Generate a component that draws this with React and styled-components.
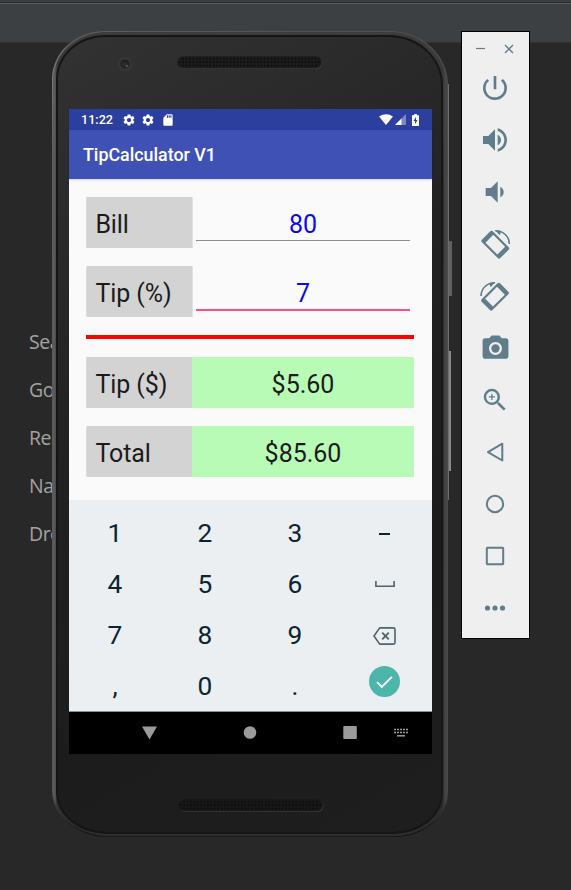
import React from "react";
import styled, { createGlobalStyle } from "styled-components";
import {
  MdPowerSettingsNew,
  MdVolumeUp,
  MdVolumeDown,
  MdPhotoCamera,
  MdZoomIn,
  MdSettings,
  MdSdCard,
} from "react-icons/md";

const GlobalStyle = createGlobalStyle`
  * { box-sizing: border-box; }
  body { margin: 0; background: #282828; }
  svg { display: block; flex: none; }
`;

const Desktop = styled.main`
  position: relative;
  width: 571px;
  height: 890px;
  overflow: hidden;
  background: #282828;
  font-family: Roboto, sans-serif;
`;

const EditorTabs = styled.div`
  height: 43px;
  background: linear-gradient(#3c3f41 2px, #292a2b 2px 3px, #58595a 3px 4px, #3c4042 4px);
  border-bottom: 1px solid #303234;
`;

const HintList = styled.ul`
  list-style: none;
  margin: 0;
  padding: 275px 0 0 29px;
  width: 64px;
  overflow: hidden;
`;

const Hint = styled.li`
  height: 48px;
  font: 19.5px/48px "Open Sans", "Noto Sans", sans-serif;
  letter-spacing: -0.5px;
  color: #a3a3a3;
  white-space: nowrap;
`;

/* ---------- device ---------- */

const Device = styled.section`
  position: absolute;
  left: 52px;
  top: 31px;
  width: 396px;
  height: 806px;
  border-radius: 53px 58px 54px 56px / 48px 54px 44px 46px;
  padding: 1px 1px 1px 1px;
  background:
    linear-gradient(transparent 94%, #171717 99.5%),
    linear-gradient(100deg, #8a8a8a 0, #5e5e5e 4%, #505050 50%, #4b494a 100%);
`;

const Rim = styled.div`
  height: 100%;
  padding: 3px 4px 2px 3px;
  border-radius: inherit;
  background:
    linear-gradient(90deg, #5b5a5b 0 2px, transparent 4px),
    linear-gradient(270deg, #454344 0 2px, transparent 4px),
    linear-gradient(#3c3c3c, #2c2b2c 20%, #2c2b2c 75%, #2e2e2e);
`;

const Body = styled.div`
  height: 100%;
  display: flex;
  flex-direction: column;
  align-items: center;
  border-radius: 49px 54px 50px 51px / 44px 50px 40px 42px;
  border: 2px solid #151515;
  border-right-color: #171717;
  background: linear-gradient(150deg, #323233 0, #2b2b2c 18%, #222 40%, #1c1c1c 70%, #1e1e1e 100%);
`;

const Bezel = styled.div`
  align-self: stretch;
  flex: none;
  height: ${(p) => p.$height}px;
  padding-top: ${(p) => p.$offset}px;
  padding-left: ${(p) => p.$left}px;
  display: flex;
  gap: 44px;
  align-items: flex-start;
`;

const SideStrip = styled.div`
  position: absolute;
  left: ${(p) => p.$x}px;
  top: ${(p) => p.$y}px;
  width: ${(p) => p.$w}px;
  height: ${(p) => p.$h}px;
  background: ${(p) => p.$tone};
`;

const Screen = styled.div`
  flex: none;
  align-self: flex-start;
  margin-left: 11px;
  width: 363px;
  height: 645px;
  display: flex;
  flex-direction: column;
  background: #fafafa;
`;

const StatusBar = styled.div`
  height: 21px;
  flex: none;
  display: flex;
  align-items: center;
  padding: 0 13px 0 12px;
  background: #2c3e9e;
  color: #fff;
`;

const Clock = styled.span`
  width: 40.5px;
  font-size: 12.6px;
  font-weight: 500;
  line-height: 21px;
`;

const StatusGroup = styled.div`
  display: flex;
  align-items: center;
  gap: ${(p) => p.$gap}px;
  margin-left: ${(p) => (p.$end ? "auto" : 0)};
`;

const AppBar = styled.header`
  position: relative;
  flex: none;
  height: 49px;
  padding-left: 14px;
  background: #4051b5;
  box-shadow: 0 1px 2px rgba(0, 0, 0, 0.16);
  color: #fff;
  font-size: 17.85px;
  font-weight: 500;
  line-height: 50px;
`;

const Form = styled.div`
  flex: 1;
  display: flex;
  flex-direction: column;
  gap: 18px;
  padding: 18px 18px 0 17px;
`;

const Row = styled.div`
  display: flex;
  height: 51px;
  font-size: 25px;
  line-height: 55px;
  color: #1b1b1b;
`;

const Label = styled.label`
  width: ${(p) => (p.$edge ? 107 : 106)}px;
  padding-left: 8.4px;
  border-left: 1px solid #dcdcdc;
  border-right: ${(p) => (p.$edge ? "1px solid #e2e2e2" : 0)};
  background: #d3d3d3;
  letter-spacing: -0.1px;
  white-space: nowrap;
`;

const Entry = styled.div`
  height: ${(p) => (p.$active ? 45 : 44)}px;
  margin: 0 4px 0 3px;
  flex: 1;
  text-align: center;
  color: #0b0be8;
  border-bottom: ${(p) => (p.$active ? "2px solid #f6508a" : "1px solid #8e8e8e")};
`;

const Result = styled.output`
  flex: 1;
  text-align: center;
  background: #b8fbb6;
`;

const Divider = styled.hr`
  width: 100%;
  height: 4px;
  flex: none;
  margin: 0;
  border: 0;
  background: #fe0000;
`;

const Keyboard = styled.div`
  flex: none;
  height: 211px;
  padding: 8px 2px 0 1px;
  display: grid;
  grid-template-columns: repeat(4, 90px);
  grid-auto-rows: 51px;
  background: #ebeff2;
`;

const Key = styled.div`
  display: flex;
  justify-content: center;
  align-items: center;
  padding-right: ${(p) => (p.$glyph ? 1 : 0)}px;
  padding-bottom: ${(p) => p.$lift}px;
  font-size: 26.3px;
  line-height: 49px;
  color: #0b2430;
`;

const NavBar = styled.nav`
  flex: none;
  height: 43px;
  display: grid;
  grid-template-columns: 30px 100px 102px 24px 50px 52px;
  align-items: center;
  justify-items: center;
  border-top: 1px solid #8b8d8e;
  background: #000;
`;

const NavSlot = styled.span`
  grid-column: ${(p) => p.$col};
  display: flex;
`;

/* ---------- emulator tool window ---------- */

const Toolbox = styled.aside`
  position: absolute;
  left: 461px;
  top: 31px;
  width: 69px;
  height: 608px;
  border: 1px solid #000;
  background: #efefef;
  color: #607d8b;
  display: flex;
  flex-direction: column;
  align-items: flex-start;
`;

const WindowControls = styled.div`
  height: 30px;
  padding-top: 12px;
  padding-left: 14px;
  display: flex;
  align-items: flex-start;
  gap: 19px;
`;

const Tool = styled.button`
  all: unset;
  height: 52px;
  width: 66px;
  display: flex;
  align-items: center;
  justify-content: center;
`;

/* ---------- drawings ---------- */

const Camera = () => (
  <svg width="16" height="16" viewBox="0 0 16 16">
    <circle cx="8" cy="8" r="7.3" fill="#363536" />
    <circle cx="8" cy="8" r="4.6" fill="#202124" />
    <circle cx="7.5" cy="8" r="2.6" fill="#2a2937" />
    <circle cx="10" cy="10" r="1.3" fill="#66444b" />
  </svg>
);

const Grille = ({ id, dark }) => (
  <svg width="146" height="13" viewBox="0 0 146 13">
    <defs>
      <pattern id={id} width="3.4" height="3.4" patternUnits="userSpaceOnUse" x="1" y="1">
        <circle cx="1.7" cy="1.7" r="0.95" fill="#080808" />
      </pattern>
    </defs>
    <rect x="1" y="1" width="144.5" height="12" rx="6" fill="#3b3b3b" />
    <rect x="0.3" y="0.3" width="144.5" height="12" rx="6" fill={dark ? "#171717" : "#1c1c1c"} />
    <rect x="2" y="1.1" width="141" height="10.2" rx="5" fill={`url(#${id})`} />
  </svg>
);

const Wifi = () => (
  <svg width="14" height="11" viewBox="0 0 14 11" fill="currentColor">
    <path d="M0 2.6C4 -.7 10 -.7 14 2.6L7 11z" />
  </svg>
);

const Signal = () => (
  <svg width="11" height="11" viewBox="0 0 11 11" fill="currentColor">
    <path d="M0 11L11 0V11z" opacity=".38" />
    <path d="M0 11L6.5 4.5V11z" />
  </svg>
);

const Battery = () => (
  <svg width="7" height="12" viewBox="0 0 7 12">
    <path d="M2.2 0h2.6v1.2H7V12H0V1.2h2.2z" fill="currentColor" />
    <path d="M4 3L1.5 7h1.6v3l2.5-4H4z" fill="#2c3e9e" />
  </svg>
);

const RotateDevice = ({ right }) => (
  <svg width="32" height="32" viewBox="0 0 32 32">
    <g transform={right ? "translate(32 .7) scale(-1 1)" : "translate(.3 .7)"}>
      <path
        transform="rotate(45 16 16)"
        fillRule="evenodd"
        fill="currentColor"
        d="M4.8 8.3H27.2a1.8 1.8 0 0 1 1.8 1.8V21.9A1.8 1.8 0 0 1 27.2 23.7H4.8a1.8 1.8 0 0 1-1.8-1.8V10.1A1.8 1.8 0 0 1 4.8 8.3zM7.6 10.5V21.5H24.4V10.5z"
      />
      <path d="M16 2.1C24 2.1 29.8 7.5 30 15.2" fill="none" stroke="currentColor" strokeWidth="1.6" />
      <path d="M15.6 1.4L22 2.2L20.4 6.6z" fill="currentColor" />
    </g>
  </svg>
);

const Outline = ({ children }) => (
  <svg width="24" height="24" viewBox="0 0 24 24" fill="none" stroke="currentColor" strokeWidth="2" strokeLinejoin="round">
    {children}
  </svg>
);

const MinusGlyph = () => (
  <svg width="11" height="2" viewBox="0 0 11 2">
    <rect width="11" height="2" fill="#0b2430" />
  </svg>
);

const SpaceGlyph = () => (
  <svg width="20" height="7" viewBox="0 0 20 7" fill="none" stroke="#51636c" strokeWidth="1.6">
    <path d="M.9 0V5.3H19.1V0" />
  </svg>
);

const BackspaceGlyph = () => (
  <svg width="23" height="18" viewBox="0 0 23 18" fill="none" stroke="#51636c" strokeWidth="1.6" strokeLinejoin="round">
    <path d="M6.7 .9H20.4Q22 .9 22 2.5V15.5Q22 17.1 20.4 17.1H6.7L1 9z" />
    <path d="M9.2 5.7L15.8 12.3M15.8 5.7L9.2 12.3" strokeWidth="1.9" />
  </svg>
);

const EnterGlyph = () => (
  <svg width="31" height="31" viewBox="0 0 31 31">
    <circle cx="15.5" cy="15.5" r="15.5" fill="#4db6ac" />
    <path d="M8.1 16.2L12.8 20.9L22.9 10.8" fill="none" stroke="#fff" strokeWidth="1.9" />
  </svg>
);

const KeyboardGlyph = () => (
  <svg width="14" height="10" viewBox="0 0 14 10" stroke="#9b9b9b" fill="none">
    <path d="M0 1.5H14M0 4.5H14" strokeWidth="1.4" strokeDasharray="2 1" />
    <path d="M3 7.8H11" strokeWidth="1.5" />
  </svg>
);

const keys = [
  { face: "1" }, { face: "2" }, { face: "3" }, { face: <MinusGlyph />, glyph: true },
  { face: "4" }, { face: "5" }, { face: "6" }, { face: <SpaceGlyph />, glyph: true },
  { face: "7" }, { face: "8" }, { face: "9" }, { face: <BackspaceGlyph />, glyph: true },
  { face: "," }, { face: "0" }, { face: "." }, { face: <EnterGlyph />, glyph: true, lift: 10 },
];

const tools = [
  <MdPowerSettingsNew size={32} />,
  <MdVolumeUp size={32} />,
  <MdVolumeDown size={32} />,
  <RotateDevice />,
  <RotateDevice right />,
  <MdPhotoCamera size={31} />,
  <MdZoomIn size={30} />,
  <Outline><path d="M19.3 3.7V20.5L5 12.1z" /></Outline>,
  <Outline><circle cx="12" cy="12" r="8.2" /></Outline>,
  <Outline><rect x="3.8" y="3.8" width="16.4" height="16.4" rx="0.6" /></Outline>,
  <svg width="24" height="24" viewBox="0 0 24 24" fill="currentColor">
    <circle cx="4.5" cy="12" r="2.6" />
    <circle cx="12" cy="12" r="2.6" />
    <circle cx="19.5" cy="12" r="2.6" />
  </svg>,
];

export default function App() {
  return (
    <Desktop>
      <GlobalStyle />
      <EditorTabs />
      <HintList>
        {["Sea", "Go", "Re", "Na", "Dro"].map((t) => (
          <Hint key={t}>{t}</Hint>
        ))}
      </HintList>

      <SideStrip $x={447} $y={84} $w={2} $h={416} $tone="#6e6c6d" />
      <SideStrip $x={449} $y={241} $w={2.6} $h={55} $tone="#625f60" />
      <SideStrip $x={449} $y={351} $w={2} $h={120} $tone="#8a8889" />

      <Device>
        <Rim>
          <Body>
            <Bezel $height={72} $offset={19} $left={59.4}>
              <Camera />
              <Grille id="earpiece" />
            </Bezel>
            <Screen>
              <StatusBar>
                <Clock>11:22</Clock>
                <StatusGroup $gap={5.5}>
                  <MdSettings size={14} />
                  <MdSettings size={14} />
                  <MdSdCard size={14} />
                </StatusGroup>
                <StatusGroup $gap={6} $end>
                  <StatusGroup $gap={2}>
                    <Wifi />
                    <Signal />
                  </StatusGroup>
                  <Battery />
                </StatusGroup>
              </StatusBar>
              <AppBar>TipCalculator V1</AppBar>
              <Form>
                <Row>
                  <Label $edge>Bill</Label>
                  <Entry>80</Entry>
                </Row>
                <Row>
                  <Label $edge>Tip (%)</Label>
                  <Entry $active>7</Entry>
                </Row>
                <Divider />
                <Row>
                  <Label>Tip ($)</Label>
                  <Result>$5.60</Result>
                </Row>
                <Row>
                  <Label>Total</Label>
                  <Result>$85.60</Result>
                </Row>
              </Form>
              <Keyboard>
                {keys.map(({ face, glyph, lift = 0 }, i) => (
                  <Key key={i} $glyph={glyph} $lift={lift}>
                    {face}
                  </Key>
                ))}
              </Keyboard>
              <NavBar>
                <NavSlot $col={2}>
                  <svg width="15" height="14" viewBox="0 0 15 14"><path d="M0 .6H15L7.5 13.6z" fill="#9b9b9b" /></svg>
                </NavSlot>
                <NavSlot $col={3}>
                  <svg width="14" height="14" viewBox="0 0 14 14"><circle cx="7" cy="6.5" r="6.3" fill="#9b9b9b" /></svg>
                </NavSlot>
                <NavSlot $col={5}>
                  <svg width="14" height="14" viewBox="0 0 14 14"><rect x=".3" y=".1" width="13.5" height="13" rx=".8" fill="#9b9b9b" /></svg>
                </NavSlot>
                <NavSlot $col={6}>
                  <KeyboardGlyph />
                </NavSlot>
              </NavBar>
            </Screen>
            <Bezel $height={70} $offset={45} $left={119.5}>
              <Grille id="speaker" dark />
            </Bezel>
          </Body>
        </Rim>
      </Device>

      <Toolbox>
        <WindowControls>
          <svg width="9" height="9" viewBox="0 0 9 9"><path d="M0 4.5H9" stroke="currentColor" strokeWidth="1.2" /></svg>
          <svg width="10" height="10" viewBox="0 0 10 10"><path d="M1 1L9 9M9 1L1 9" stroke="currentColor" strokeWidth="1.4" /></svg>
        </WindowControls>
        {tools.map((icon, i) => (
          <Tool key={i}>{icon}</Tool>
        ))}
      </Toolbox>
    </Desktop>
  );
}
